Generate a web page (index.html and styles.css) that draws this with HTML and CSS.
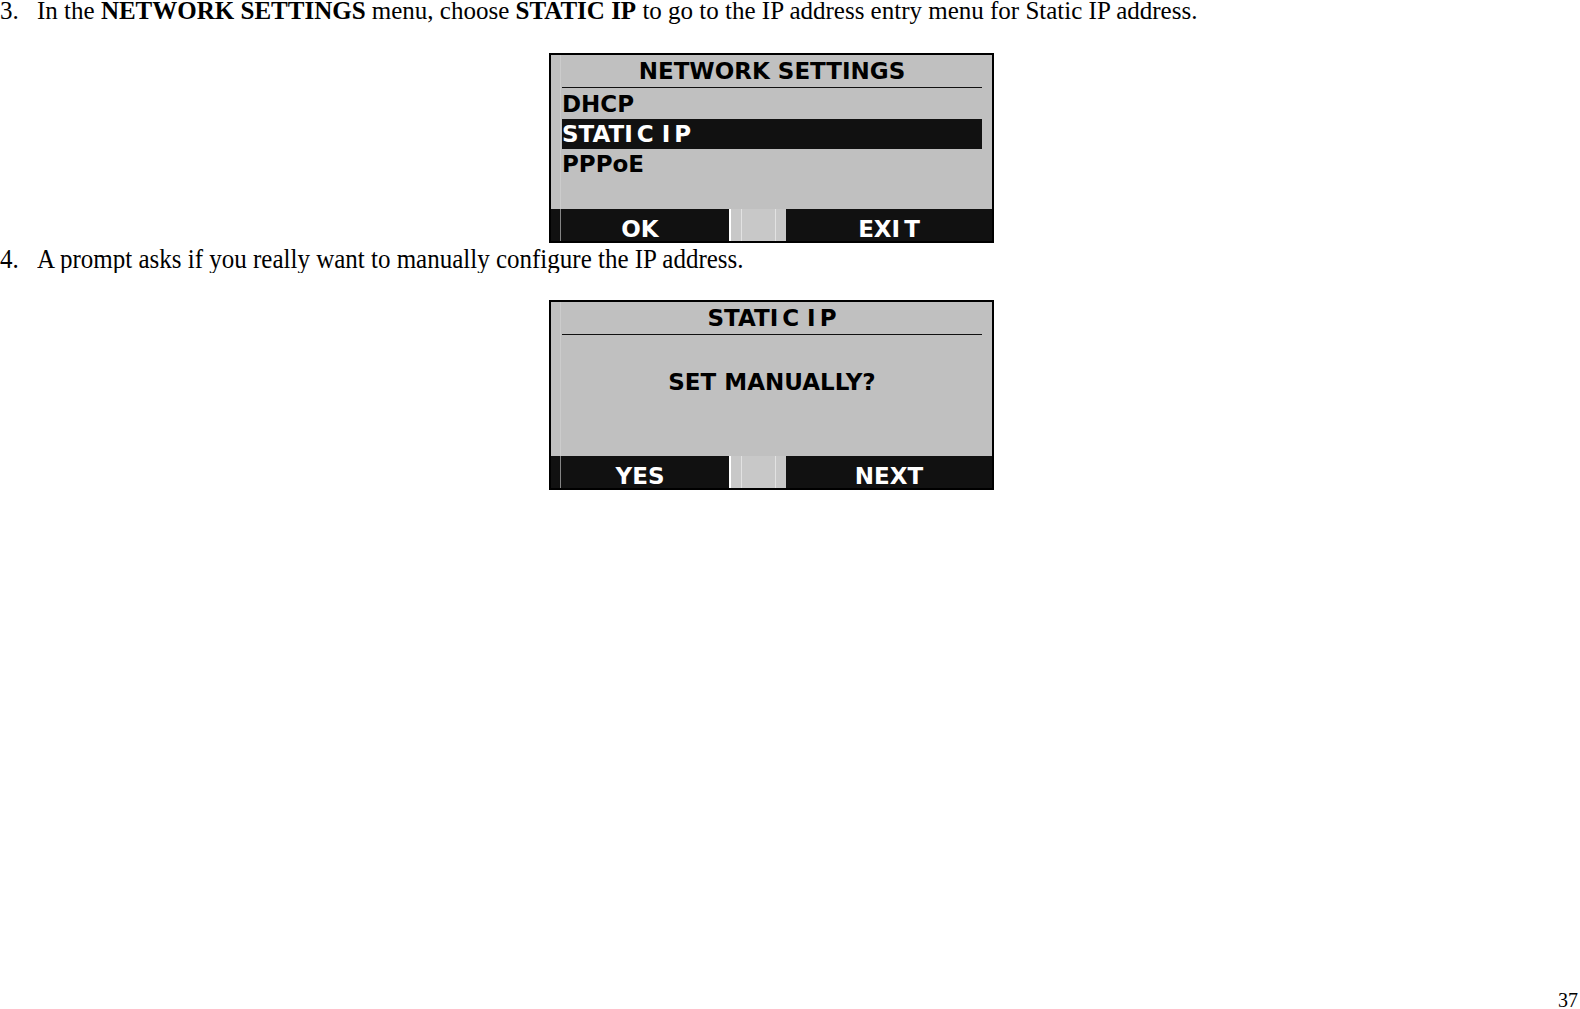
FILE: index.html
```html
<!DOCTYPE html>
<html lang="en">
<head>
    <meta charset="UTF-8">
    <title>Network Settings - Static IP</title>
    <link rel="stylesheet" href="styles.css">
</head>
<body>
    <div class="page">
        <div class="step">
            <span class="step-num">3.</span>
            <span class="step-text">In the <b>NETWORK SETTINGS</b> menu, choose <b>STATIC IP</b> to go to the IP address entry menu for Static IP address.</span>
        </div>

        <div class="lcd lcd-first">
            <div class="lcd-body">
                <div class="lcd-title">NETWORK SETTINGS</div>
                <div class="lcd-list">
                    <div class="lcd-row">DHCP</div>
                    <div class="lcd-row selected">STAT<span class="gap-i">I</span>C <span class="gap-i">I</span>P</div>
                    <div class="lcd-row">PPPoE</div>
                </div>
            </div>
            <div class="lcd-keys">
                <div class="key key-left">OK</div>
                <div class="key-gap"></div>
                <div class="key key-right">EX<span class="gap-i">I</span>T</div>
            </div>
        </div>

        <div class="step step-tall">
            <span class="step-num">4.</span>
            <span class="step-text">A prompt asks if you really want to manually configure the IP address.</span>
        </div>

        <div class="lcd lcd-second">
            <div class="lcd-body">
                <div class="lcd-title">STAT<span class="gap-i">I</span>C <span class="gap-i">I</span>P</div>
                <div class="lcd-message">SET MANUALLY?</div>
            </div>
            <div class="lcd-keys">
                <div class="key key-left">YES</div>
                <div class="key-gap"></div>
                <div class="key key-right">NEXT</div>
            </div>
        </div>
    </div>
    <div class="page-num">37</div>
</body>
</html>
```

FILE: styles.css
```css
body { margin: 0; background: #fff; color: #000; font-family: "Liberation Serif", "Times New Roman", serif; }
.page { position: relative; height: 1009px; }

/* numbered instructions */
.step { display: flex; font-size: 25px; line-height: 22px; white-space: nowrap; }
.step-num { width: 37px; flex: none; }
.step-tall { margin-top: 4px; line-height: 26px; }
.step-tall .step-num, .step-tall .step-text { display: inline-block; transform: scaleY(1.08); transform-origin: center bottom; }

/* phone display */
.lcd { width: 445px; height: 190px; box-sizing: border-box; margin-left: 549px; border: 2px solid #000; background: #c0c0c0; display: flex; flex-direction: column; font-family: "DejaVu Sans", Verdana, sans-serif; font-weight: bold; font-size: 23px; position: relative; }
.lcd-first { margin-top: 31px; }
.lcd-second { margin-top: 27px; }
.lcd::before { content: ""; position: absolute; left: 9px; top: 0; bottom: 0; width: 1px; background: #d4d4d4; z-index: 1; opacity: 0.6; }
.lcd-body { flex: 1; padding: 0 10px 0 11px; position: relative; }
.lcd-title { height: 32px; line-height: 32px; text-align: center; border-bottom: 1px solid #111; }
.lcd-list { margin-top: 1px; }
.lcd-row { height: 30px; line-height: 30px; }
.lcd-row.selected { background: #111; color: #fff; }
.lcd-message { text-align: center; line-height: 30px; margin-top: 32px; }
.gap-i { margin-right: 4px; }

/* soft key bar */
.lcd-keys { height: 32px; display: flex; background: #111; color: #fff; position: relative; }
.key { height: 32px; line-height: 40px; overflow: hidden; text-align: center; }
.key-left { width: 178px; }
.key-right { flex: 1; }
.key-gap { width: 57px; background: #c8c8c8; box-sizing: border-box; border-left: 2px solid #fff; position: relative; }
.key-gap::before, .key-gap::after { content: ""; position: absolute; top: 0; bottom: 0; width: 1px; background: #e2e2e2; }
.key-gap::before { left: 10px; }
.key-gap::after { right: 10px; }

.page-num { position: absolute; right: 2px; bottom: -3px; font-size: 20px; line-height: 24px; }
```
